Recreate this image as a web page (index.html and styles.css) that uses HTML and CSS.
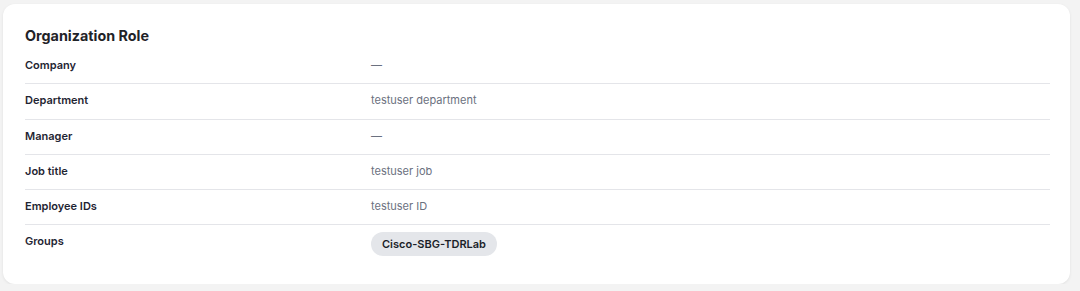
FILE: index.html
```html
<!DOCTYPE html>
<html lang="en">
<head>
<meta charset="utf-8">
<title>Organization Role</title>
<link rel="stylesheet" href="styles.css">
</head>
<body>
<section class="card">
  <h2 class="card-title">Organization Role</h2>
  <dl class="rows">
    <div class="row"><dt class="label">Company</dt><dd class="value">—</dd></div>
    <div class="row"><dt class="label">Department</dt><dd class="value">testuser department</dd></div>
    <div class="row"><dt class="label">Manager</dt><dd class="value">—</dd></div>
    <div class="row"><dt class="label">Job title</dt><dd class="value">testuser job</dd></div>
    <div class="row"><dt class="label">Employee IDs</dt><dd class="value">testuser ID</dd></div>
    <div class="row row-last"><dt class="label">Groups</dt><dd class="value"><span class="chip">Cisco-SBG-TDRLab</span></dd></div>
  </dl>
</section>
</body>
</html>
```
FILE: styles.css
```css
* { box-sizing: border-box; }
html, body { margin: 0; padding: 0; }
body {
  background: #f3f3f3;
  font-family: Inter, "Noto Sans", sans-serif;
  padding: 4px 10px 0 3px;
}
.card {
  background: #ffffff;
  border-radius: 12px;
  box-shadow: 0 1px 3px rgba(0,0,0,0.08);
  padding: 20px 20px 20px 22px;
  height: 280px;
}
.card-title {
  margin: 0 0 1px;
  font-size: 14.35px;
  line-height: 24px;
  font-weight: 700;
  color: #1f2328;
}
.rows { margin: 0; }
.row {
  display: grid;
  grid-template-columns: 346px 1fr;
  align-items: start;
  height: 35.25px;
  padding: 10px 0;
  border-bottom: 1px solid #e4e5e9;
}
.row-last { border-bottom: none; height: auto; }
.label {
  margin: 0;
  font-size: 11px;
  line-height: 13px;
  font-weight: 600;
  color: #1f2533;
}
.value {
  margin: 0;
  font-size: 11px;
  line-height: 13px;
  color: #6b7180;
}
.chip {
  display: inline-flex;
  align-items: center;
  height: 24px;
  margin-top: -3px;
  padding: 0 11px;
  border-radius: 12px;
  background: #e4e6ea;
  color: #1b1f29;
  font-weight: 600;
  font-size: 11px;
}
```
